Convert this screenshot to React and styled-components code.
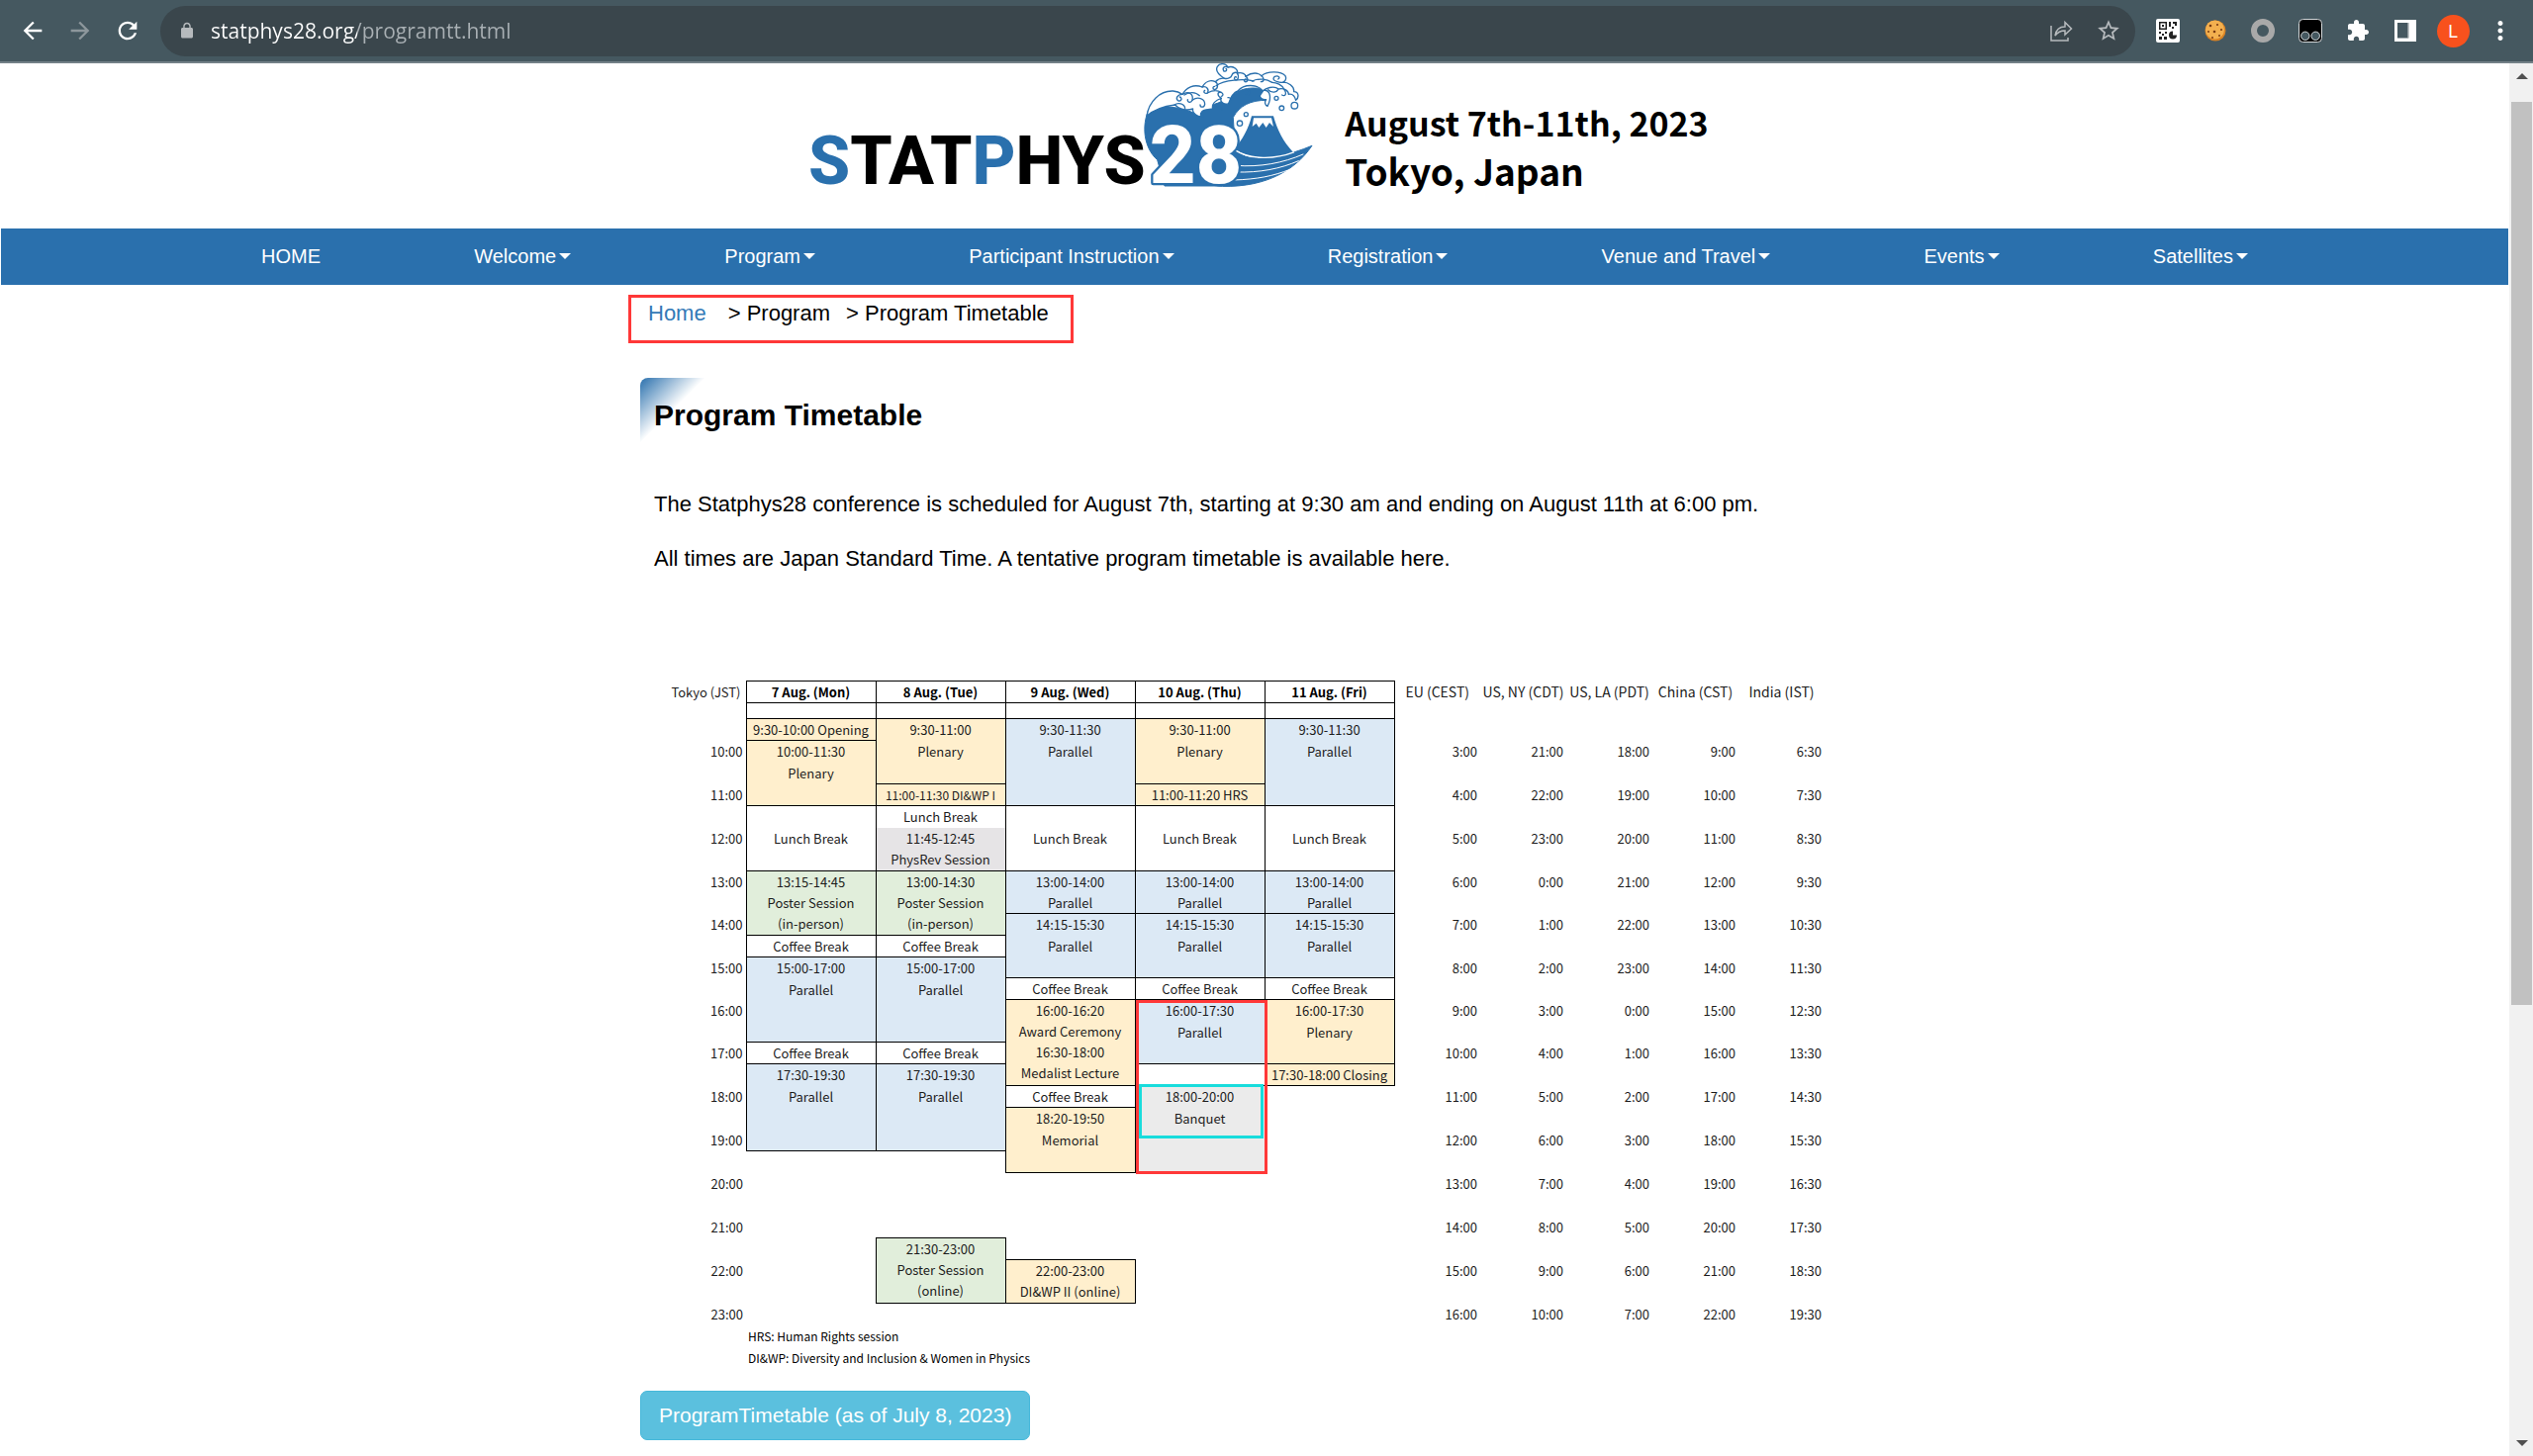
import React from "react";
import styled, { createGlobalStyle, css } from "styled-components";

const blue = "#2a70ad";
const sans = `"Liberation Sans", Arial, sans-serif`;
const display = `Roboto, "Liberation Sans", sans-serif`;
const gothic = `"Noto Sans CJK JP", "Noto Sans", sans-serif`;

const GlobalStyle = createGlobalStyle`
  * { box-sizing: border-box; }
  body { margin: 0; background: #fff; color: #000; font-family: ${sans}; }
  button, input { font: inherit; }
`;

/* ---------- browser toolbar ---------- */

const Toolbar = styled.header`
  display: flex;
  align-items: center;
  height: 64px;
  padding: 0 9px;
  background: #455860;
  border-bottom: 2px solid #738087;
`;

const IconButton = styled.button`
  display: grid;
  place-items: center;
  flex: none;
  width: 48px;
  height: 48px;
  padding: 0;
  border: 0;
  background: none;
  color: ${(p) => p.$tone || "#fff"};
`;

const AddressBar = styled.div`
  display: flex;
  flex: 1;
  align-items: center;
  height: 51px;
  margin: 0 9px;
  padding: 0 3px 0 18px;
  border-radius: 26px;
  background: #3a464c;
  color: #b6babd;
`;

const AddressInput = styled.input`
  flex: 1;
  min-width: 0;
  margin-left: 15px;
  padding: 0;
  border: 0;
  outline: 0;
  font-family: "Open Sans", "Noto Sans", sans-serif;
  font-size: 21px;
  line-height: 32px;
  color: transparent;
  background: linear-gradient(90deg, #fff 148px, #a9b0b4 148px);
  background-clip: text;
  -webkit-background-clip: text;
`;

const Avatar = styled.span`
  display: grid;
  place-items: center;
  width: 33px;
  height: 33px;
  border-radius: 50%;
  background: #f8511d;
  color: #fff;
  font-family: Roboto, sans-serif;
  font-size: 18px;
`;

/* ---------- page shell ---------- */

const Shell = styled.div`
  display: flex;
  min-height: calc(100vh - 64px);
`;

const Page = styled.div`
  flex: 1;
  min-width: 0;
  padding: 0 1px;
`;

const Scrollbar = styled.div`
  display: flex;
  flex-direction: column;
  align-items: center;
  width: 24px;
  padding: 0 1px 0 2px;
  background: #f1f1f1;
`;

const ScrollArrow = styled.button`
  display: grid;
  place-items: center;
  width: 21px;
  height: 26px;
  padding: 0;
  border: 0;
  background: none;
`;

const ScrollTrack = styled.div`
  flex: 1;
  width: 100%;
  padding-top: 13px;
`;

const ScrollThumb = styled.div`
  height: 68%;
  background: #c1c1c1;
`;

const Banner = styled.div`
  display: flex;
  justify-content: center;
  gap: 30px;
  height: 167px;
`;

const BannerDate = styled.div`
  padding-top: 36px;
  font-family: ${gothic};
  font-weight: 700;
`;

const DateLine = styled.div`
  font-size: ${(p) => (p.$large ? 37 : 34)}px;
  line-height: 48px;
  white-space: nowrap;
`;

const NavBar = styled.nav`
  display: flex;
  align-items: center;
  justify-content: space-between;
  height: 57px;
  padding: 0 263px 2px;
  background: ${blue};
`;

const NavLink = styled.a`
  display: flex;
  align-items: center;
  gap: 3px;
  color: #fff;
  font-size: 20px;
  line-height: 28px;
  white-space: nowrap;
  text-decoration: none;
`;

const Caret = styled.span`
  border: 6px solid transparent;
  border-top-color: #fff;
  border-bottom: 0;
`;

const Content = styled.main`
  width: 1242px;
  max-width: 100%;
  margin: 0 auto;
`;

const Breadcrumb = styled.nav`
  display: flex;
  width: max-content;
  height: 49px;
  margin: 10px 0 0 -12px;
  padding: 2px 22px 0 17px;
  border: 3px solid #ff3838;
  font-size: 22px;
  line-height: 28px;
`;

const Crumb = styled.span`
  margin-right: ${(p) => p.$gap || 0}px;
`;

const CrumbLink = styled.a`
  margin-right: 22px;
  color: #337ab7;
  text-decoration: none;
`;

const Title = styled.h1`
  margin: 35px 0 0;
  padding: 20px 0 0 14px;
  height: 100px;
  border-radius: 8px 0 0 0;
  background: linear-gradient(135deg, #2a70ad, #ffffff 50%) no-repeat 0 0 / 66px 66px;
  font-size: 30px;
  line-height: 36px;
`;

const Text = styled.p`
  margin: 0 0 0 14px;
  font-size: 22px;
  line-height: 55px;
`;

const TimetableArea = styled.figure`
  position: relative;
  margin: 96px 0 0 15px;
  font-family: ${gothic};
`;

const Mark = styled.span`
  position: absolute;
  border: 3px solid ${(p) => p.$color};
  pointer-events: none;
  ${(p) => (p.$inner
    ? css`left: 489px; top: 408px; width: 126px; height: 55px;`
    : css`left: 486px; top: 323px; width: 133px; height: 176px;`)}
`;

/* ---------- timetable ---------- */

const fills = { y: "#ffefcd", b: "#dce9f5", g: "#e1eedb", s: "#e6e4e6", e: "#ebebeb", w: "#fff" };

const Table = styled.table`
  width: 1180px;
  border-collapse: collapse;
  table-layout: fixed;
  font-size: 13px;
  line-height: 21px;
  color: #1c1c1c;
`;

const Row = styled.tr`
  height: ${(p) => (p.$short ? 21 : 22)}px;
`;

const Spacer = styled.tr`
  height: 16px;
`;

const Col = styled.col`
  width: ${(p) => p.$w}px;
`;

const Blank = styled.td`
  padding: 0;
`;

const Boxed = styled.td`
  padding: 0;
  border: 1px solid #000;
`;

const DayHead = styled.th`
  padding: 0;
  border: 1px solid #000;
  color: #000;
  font-weight: 700;
`;

const ZoneHead = styled.th`
  padding: ${(p) => (p.$first ? "0 5px 0 0" : "0")};
  text-align: ${(p) => (p.$first ? "right" : "center")};
  font-size: ${(p) => (p.$first ? 13 : 14)}px;
  font-weight: 400;
  white-space: nowrap;
`;

const Time = styled.td`
  padding: 0 3px 0 0;
  text-align: right;
`;

const Session = styled.td`
  padding: 0;
  border: 1px solid #000;
  background: ${(p) => fills[p.$fill]};
  text-align: center;
  vertical-align: ${(p) => (p.$middle ? "middle" : "top")};
  line-height: ${(p) => (p.$loose ? 22 : 21)}px;
  font-size: ${(p) => (p.$small ? 12 : 13)}px;
  white-space: nowrap;
  ${(p) => p.$openTop && css`border-top: 0;`}
  ${(p) => p.$openBottom && css`border-bottom: 0;`}
`;

const Line = styled.div``;

const Notes = styled.figcaption`
  padding-left: 94px;
  font-size: 12px;
  line-height: 22px;
`;

const Download = styled.a`
  display: inline-block;
  margin: 22px 0 16px;
  padding: 0 18px;
  border: 1px solid #46b8da;
  border-radius: 7px;
  background: #5bc0de;
  color: #fff;
  font-size: 21px;
  line-height: 48px;
  text-decoration: none;
`;

const days = ["7 Aug. (Mon)", "8 Aug. (Tue)", "9 Aug. (Wed)", "10 Aug. (Thu)", "11 Aug. (Fri)"];
const zones = ["EU (CEST)", "US, NY (CDT)", "US, LA (PDT)", "China (CST)", "India (IST)"];

const lunch = { at: 4, span: 3, fill: "w", lines: ["Lunch Break"], middle: true };
const coffee = (at) => ({ at, span: 1, fill: "w", lines: ["Coffee Break"] });
const s = (at, span, fill, ...lines) => ({ at, span, fill, lines });

const schedule = [
  [
    s(0, 1, "y", "9:30-10:00 Opening"),
    s(1, 3, "y", "10:00-11:30", "Plenary"),
    lunch,
    s(7, 3, "g", "13:15-14:45", "Poster Session", "(in-person)"),
    coffee(10),
    s(11, 4, "b", "15:00-17:00", "Parallel"),
    coffee(15),
    s(16, 4, "b", "17:30-19:30", "Parallel"),
  ],
  [
    s(0, 3, "y", "9:30-11:00", "Plenary"),
    { ...s(3, 1, "y", "11:00-11:30 DI&WP I"), small: true },
    { ...s(4, 1, "w", "Lunch Break"), openBottom: true },
    { ...s(5, 2, "s", "11:45-12:45", "PhysRev Session"), openTop: true },
    s(7, 3, "g", "13:00-14:30", "Poster Session", "(in-person)"),
    coffee(10),
    s(11, 4, "b", "15:00-17:00", "Parallel"),
    coffee(15),
    s(16, 4, "b", "17:30-19:30", "Parallel"),
    s(24, 3, "g", "21:30-23:00", "Poster Session", "(online)"),
  ],
  [
    s(0, 4, "b", "9:30-11:30", "Parallel"),
    lunch,
    s(7, 2, "b", "13:00-14:00", "Parallel"),
    s(9, 3, "b", "14:15-15:30", "Parallel"),
    coffee(12),
    s(13, 4, "y", "16:00-16:20", "Award Ceremony", "16:30-18:00", "Medalist Lecture"),
    coffee(17),
    s(18, 3, "y", "18:20-19:50", "Memorial"),
    s(25, 2, "y", "22:00-23:00", "DI&WP II (online)"),
  ],
  [
    s(0, 3, "y", "9:30-11:00", "Plenary"),
    s(3, 1, "y", "11:00-11:20 HRS"),
    lunch,
    s(7, 2, "b", "13:00-14:00", "Parallel"),
    s(9, 3, "b", "14:15-15:30", "Parallel"),
    coffee(12),
    s(13, 3, "b", "16:00-17:30", "Parallel"),
    s(16, 1, "w"),
    s(17, 4, "e", "18:00-20:00", "Banquet"),
  ],
  [
    s(0, 4, "b", "9:30-11:30", "Parallel"),
    lunch,
    s(7, 2, "b", "13:00-14:00", "Parallel"),
    s(9, 3, "b", "14:15-15:30", "Parallel"),
    coffee(12),
    s(13, 3, "y", "16:00-17:30", "Plenary"),
    s(16, 1, "y", "17:30-18:00 Closing"),
  ],
];

const shortRows = [8, 11, 14];
const clock = (h, m = "00") => `${h % 24}:${m}`;

function times(row) {
  if (row % 2 === 0) return null;
  const h = 10 + (row - 1) / 2;
  return [clock(h), clock(h + 17), clock(h + 11), clock(h + 8), clock(h + 23), clock(h + 20, "30")];
}

function Slot({ day, row }) {
  const item = schedule[day].find((x) => x.at === row);
  if (item) {
    return (
      <Session
        rowSpan={item.span}
        $fill={item.fill}
        $middle={item.middle}
        $small={item.small}
        $openTop={item.openTop}
        $openBottom={item.openBottom}
        $loose={item.lines.length < item.span}
      >
        {item.lines.map((t) => <Line key={t}>{t}</Line>)}
      </Session>
    );
  }
  const covered = schedule[day].some((x) => row > x.at && row < x.at + x.span);
  return covered ? null : <Blank />;
}

function Timetable() {
  return (
    <Table>
      <colgroup>
        <Col $w={92} />
        {days.map((d) => <Col key={d} $w={131} />)}
        {zones.map((z) => <Col key={z} $w={87} />)}
      </colgroup>
      <thead>
        <Row>
          <ZoneHead $first>Tokyo (JST)</ZoneHead>
          {days.map((d) => <DayHead key={d}>{d}</DayHead>)}
          {zones.map((z) => <ZoneHead key={z}>{z}</ZoneHead>)}
        </Row>
      </thead>
      <tbody>
        <Spacer>
          <Blank />
          {days.map((d) => <Boxed key={d} />)}
          <Blank colSpan={5} />
        </Spacer>
        {Array.from({ length: 28 }, (_, row) => {
          const t = times(row);
          return (
            <Row key={row} $short={shortRows.includes(row)}>
              {t ? <Time>{t[0]}</Time> : <Blank />}
              {days.map((d, i) => <Slot key={d} day={i} row={row} />)}
              {t ? t.slice(1).map((v, i) => <Time key={zones[i]}>{v}</Time>) : <Blank colSpan={5} />}
            </Row>
          );
        })}
      </tbody>
    </Table>
  );
}

/* ---------- drawings ---------- */

const Mat = ({ d, size = 28 }) => (
  <svg width={size} height={size} viewBox="0 0 24 24" fill="currentColor" aria-hidden="true"><path d={d} /></svg>
);

const Share = () => (
  <svg width="24" height="24" viewBox="0 0 24 24" fill="none" stroke="currentColor" strokeWidth="1.5" aria-hidden="true">
    <path d="M2 7V22H19V19" />
    <path d="M6 17C7 11 10 8 16 8V3.5L22.5 10L16 16V12C11.500 12 8.500 13.500 6 17Z" />
  </svg>
);

const Qr = () => (
  <svg width="24" height="24" viewBox="0 0 24 24" aria-hidden="true">
    <rect width="24" height="24" rx="2" fill="#fff" />
    <g fill="#222">
      <path d="M3 3h8v8H3zM4.500 4.500v5h5v-5z" fillRule="evenodd" />
      <path d="M6 6h2v2H6zM13 3h2v5h-2zM17 3h4v4h-2V5h-2zM16 8h2v2h-2zM3 13h2v2H3zM6 15h2v2H6zM9 13h2v2H9zM3 18h3v3H3zM8 18h3v3H8z" />
      <path d="M17 12.500a4 4 0 1 0 4 4h-4z" />
    </g>
  </svg>
);

const Cookie = () => (
  <svg width="22" height="22" viewBox="0 0 22 22" aria-hidden="true">
    <circle cx="11" cy="11" r="10.500" fill="#d98324" />
    <circle cx="10.500" cy="10" r="9.500" fill="#f3b04f" />
    <g fill="#7a3b12">
      <circle cx="6" cy="6" r="1.300" /><circle cx="13" cy="5" r="1.100" /><circle cx="10" cy="12" r="1.300" />
      <circle cx="4" cy="12" r="1" /><circle cx="17" cy="10" r="1.100" /><circle cx="15" cy="16" r="1" /><circle cx="8" cy="18" r="1" />
    </g>
  </svg>
);

const Ring = () => (
  <svg width="24" height="24" viewBox="0 0 24 24" aria-hidden="true"><circle cx="12" cy="12" r="9" fill="none" stroke="#a9a9a9" strokeWidth="6" /></svg>
);

const Monkey = () => (
  <svg width="24" height="24" viewBox="0 0 24 24" aria-hidden="true">
    <rect x="0.500" y="0.500" width="23" height="23" rx="4" fill="#000" stroke="#d5d9db" />
    <g fill="#455860" stroke="#d5d9db"><circle cx="6.800" cy="17.300" r="4.200" /><circle cx="17.200" cy="17.300" r="4.200" /></g>
  </svg>
);

const Panel = () => (
  <svg width="22" height="22" viewBox="0 0 22 22" aria-hidden="true">
    <path fill="#fff" fillRule="evenodd" d="M0 0H22V22H0ZM3 3V18.500H13.500V3Z" />
    <path fill="#8d979c" d="M13 3h1.500v15.500H13z" />
  </svg>
);

const Tri = ({ down }) => (
  <svg width="12" height="6" viewBox="0 0 12 6" aria-hidden="true"><path fill="#505050" d={down ? "M0 0H12L6 6Z" : "M0 6H12L6 0Z"} /></svg>
);

const Logo = () => (
  <svg width="520" height="160" viewBox="0 0 520 160" role="img" aria-label="STATPHYS28">
    <text x="8" y="122" fontFamily={display} fontWeight="800" fontSize="68" fill="#000">
      <tspan fill={blue}>S</tspan>TAT<tspan fill={blue}>P</tspan>HYS
    </text>
    <g transform="translate(338 -4) scale(0.3333)" strokeLinecap="round" strokeLinejoin="round">
      <path fill={blue} stroke={blue} strokeWidth="3" d="M42 152C20 200 26 268 68 305L90 384H240C380 394 480 346 537 262C470 290 400 305 345 297C315 290 300 272 302 240L298 176C318 140 350 124 400 124C412 96 380 80 332 90C300 98 285 124 235 138L185 165C130 140 80 140 42 152Z" />
      <g fill="#fff" stroke={blue} strokeWidth="4">
        <path d="M36 172C42 128 76 94 116 96C128 97 138 102 144 106C156 86 178 74 204 84C214 66 230 62 244 68C252 60 262 56 272 58C256 48 242 36 250 22C258 10 276 12 282 24C302 18 314 34 310 42C326 38 336 46 336 52C356 38 374 40 384 50C400 36 442 34 456 50C462 62 452 72 442 70C466 66 484 84 482 98C498 98 498 116 488 124C484 108 476 104 466 106C466 94 450 86 436 90C420 78 396 88 388 96C372 74 330 74 312 96C300 100 290 116 284 134C272 140 256 128 262 118C244 124 232 136 236 150C222 152 208 150 202 160C196 168 202 174 208 172C190 178 172 160 176 150C150 158 130 148 122 138C90 142 60 150 36 172Z" />
        <path d="M390 94C410 92 416 116 402 142C394 140 392 128 398 122C388 124 376 116 380 108Z" />
      </g>
      <g fill="none" stroke={blue} strokeWidth="4">
        <path d="M144 106C128 106 122 120 132 126C142 128 144 116 136 114M144 106C166 94 178 108 174 124C170 134 158 130 160 122" />
        <path d="M174 124C190 112 212 118 212 136C210 148 198 146 198 138M204 84C218 80 226 92 220 102C212 106 206 98 212 94M150 108C164 98 184 98 196 110" />
        <path d="M244 68C254 74 252 90 242 92C234 90 236 82 242 82M220 102C238 92 252 94 262 100M262 118C248 110 250 98 260 100C270 102 268 112 262 112" />
        <path d="M282 24C270 18 264 28 270 36C278 38 280 30 276 28M272 58C280 60 292 56 294 48C296 40 308 38 310 42M310 42C318 52 312 66 304 62C298 58 304 50 308 54" />
        <path d="M336 52C346 58 342 70 334 68C328 64 334 58 338 60M384 50C394 58 392 68 382 68M356 66C376 56 400 60 416 70" />
        <path d="M442 70C420 66 416 60 424 52C436 48 442 56 434 60M246 80C270 62 330 58 360 66M416 70C430 70 446 78 452 90M404 92C416 104 430 100 434 92M452 90C462 104 456 114 446 108M284 134C296 128 292 114 282 116M320 98C336 90 350 92 348 102C344 112 334 106 338 102" />
        <path d="M120 138C130 130 150 134 152 148M236 150C244 140 260 142 264 152" />
      </g>
      <g fill="#fff" stroke={blue} strokeWidth="4">
        <circle cx="318" cy="194" r="8" /><circle cx="337" cy="167" r="6" /><circle cx="429" cy="118" r="6" /><circle cx="445" cy="148" r="7" /><circle cx="484" cy="140" r="10" />
      </g>
      <path fill={blue} d="M302 272C325 245 345 210 354 172H420C432 215 450 250 480 282C420 305 350 305 302 272Z" />
      <path fill="#fff" d="M360 178H414L420 204L408 192L398 207L388 192L376 207L368 194L356 204Z" />
      <g fill="none" stroke="#fff" strokeWidth="4">
        <path d="M302 274C350 306 425 304 482 282" />
        <path strokeWidth="3" d="M306 322C380 328 450 314 510 288M306 342C380 344 440 332 496 308M300 366C370 364 420 354 470 334" />
      </g>
      <text x="44" y="376" fontFamily={display} fontWeight="800" fontSize="244" fill="#fff" stroke={blue} strokeWidth="14" paintOrder="stroke">28</text>
    </g>
  </svg>
);

const path = {
  back: "M20 11H7.830l5.590-5.590L12 4l-8 8 8 8 1.410-1.410L7.830 13H20v-2z",
  forward: "M12 4l-1.410 1.410L16.170 11H4v2h12.170l-5.580 5.590L12 20l8-8z",
  reload: "M17.650 6.350C16.200 4.900 14.210 4 12 4c-4.420 0-7.990 3.580-7.990 8s3.570 8 7.990 8c3.730 0 6.840-2.550 7.730-6h-2.080c-.82 2.330-3.040 4-5.650 4-3.310 0-6-2.690-6-6s2.690-6 6-6c1.660 0 3.140.69 4.220 1.780L13 11h7V4l-2.350 2.350z",
  lock: "M18 8h-1V6c0-2.760-2.240-5-5-5S7 3.240 7 6v2H6c-1.100 0-2 .9-2 2v10c0 1.100.9 2 2 2h12c1.100 0 2-.9 2-2V10c0-1.100-.9-2-2-2zm-2.900 0H8.900V6c0-1.710 1.390-3.100 3.100-3.100s3.100 1.390 3.100 3.100v2z",
  star: "M22 9.240l-7.190-.62L12 2 9.190 8.630 2 9.240l5.460 4.730L5.820 21 12 17.270 18.180 21l-1.630-7.030L22 9.240zM12 15.400l-3.760 2.270 1-4.280-3.320-2.880 4.380-.38L12 6.100l1.710 4.040 4.380.38-3.320 2.880 1 4.280L12 15.400z",
  puzzle: "M20.500 11H19V7c0-1.100-.9-2-2-2h-4V3.500C13 2.120 11.880 1 10.500 1S8 2.120 8 3.500V5H4c-1.100 0-1.990.9-1.990 2v3.800H3.500c1.490 0 2.700 1.210 2.700 2.700s-1.210 2.700-2.700 2.700H2V20c0 1.100.9 2 2 2h3.800v-1.500c0-1.490 1.210-2.700 2.700-2.700 1.490 0 2.700 1.210 2.700 2.700V22H17c1.100 0 2-.9 2-2v-4h1.500c1.380 0 2.500-1.120 2.500-2.500S21.880 11 20.500 11z",
  dots: "M12 8c1.100 0 2-.9 2-2s-.9-2-2-2-2 .9-2 2 .9 2 2 2zm0 2c-1.100 0-2 .9-2 2s.9 2 2 2 2-.9 2-2-.9-2-2-2zm0 6c-1.100 0-2 .9-2 2s.9 2 2 2 2-.9 2-2-.9-2-2-2z",
};

const menu = ["HOME", "Welcome", "Program", "Participant Instruction", "Registration", "Venue and Travel", "Events", "Satellites"];

export default function App() {
  return (
    <>
      <GlobalStyle />
      <Toolbar>
        <IconButton aria-label="Back"><Mat d={path.back} /></IconButton>
        <IconButton aria-label="Forward" $tone="#8d979c"><Mat d={path.forward} /></IconButton>
        <IconButton aria-label="Reload"><Mat d={path.reload} /></IconButton>
        <AddressBar>
          <Mat d={path.lock} size={18} />
          <AddressInput aria-label="Address" defaultValue="statphys28.org/programtt.html" />
          <IconButton aria-label="Share" $tone="#b6babd"><Share /></IconButton>
          <IconButton aria-label="Bookmark" $tone="#b6babd"><Mat d={path.star} size={26} /></IconButton>
        </AddressBar>
        <IconButton aria-label="QR code"><Qr /></IconButton>
        <IconButton aria-label="Cookies"><Cookie /></IconButton>
        <IconButton aria-label="Recorder"><Ring /></IconButton>
        <IconButton aria-label="Scripts"><Monkey /></IconButton>
        <IconButton aria-label="Extensions"><Mat d={path.puzzle} size={24} /></IconButton>
        <IconButton aria-label="Side panel"><Panel /></IconButton>
        <IconButton aria-label="Profile"><Avatar>L</Avatar></IconButton>
        <IconButton aria-label="Menu"><Mat d={path.dots} size={30} /></IconButton>
      </Toolbar>
      <Shell>
        <Page>
          <Banner>
            <Logo />
            <BannerDate>
              <DateLine>August 7th-11th, 2023</DateLine>
              <DateLine $large>Tokyo, Japan</DateLine>
            </BannerDate>
          </Banner>
          <NavBar>
            {menu.map((m, i) => (
              <NavLink href="#" key={m}>{m}{i > 0 && <Caret />}</NavLink>
            ))}
          </NavBar>
          <Content>
            <Breadcrumb>
              <CrumbLink href="#">Home</CrumbLink>
              <Crumb $gap={16}>&gt; Program</Crumb>
              <Crumb>&gt; Program Timetable</Crumb>
            </Breadcrumb>
            <Title>Program Timetable</Title>
            <Text>The Statphys28 conference is scheduled for August 7th, starting at 9:30 am and ending on August 11th at 6:00 pm.</Text>
            <Text>All times are Japan Standard Time. A tentative program timetable is available here.</Text>
            <TimetableArea>
              <Timetable />
              <Notes>
                <Line>HRS: Human Rights session</Line>
                <Line>DI&amp;WP: Diversity and Inclusion &amp; Women in Physics</Line>
              </Notes>
              <Mark $color="#ff3838" />
              <Mark $color="#18dcdc" $inner />
            </TimetableArea>
            <Download href="#">ProgramTimetable (as of July 8, 2023)</Download>
          </Content>
        </Page>
        <Scrollbar>
          <ScrollArrow aria-label="Scroll up"><Tri /></ScrollArrow>
          <ScrollTrack><ScrollThumb /></ScrollTrack>
          <ScrollArrow aria-label="Scroll down"><Tri down /></ScrollArrow>
        </Scrollbar>
      </Shell>
    </>
  );
}
